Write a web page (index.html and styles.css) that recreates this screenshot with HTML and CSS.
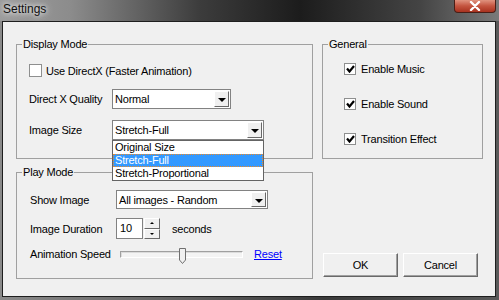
FILE: index.html
```html
<!DOCTYPE html>
<html lang="en">
<head>
    <meta charset="UTF-8">
    <title>Settings</title>
    <link rel="stylesheet" href="styles.css">
</head>
<body>
<div class="window">
    <div class="titlebar">
        <span class="title">Settings</span>
        <div class="close">
            <svg width="14" height="10" viewBox="0 0 14 10"><path d="M3 1 L11 9 M11 1 L3 9" stroke="#fff" stroke-width="2.4" stroke-linecap="round"/></svg>
        </div>
    </div>

    <div class="client">
        <div class="left-col">
            <fieldset class="group display">
                <legend>Display Mode</legend>
                <div class="rows">
                    <label class="check"><span class="box"></span>Use DirectX (Faster Animation)</label>
                    <div class="row">
                        <span class="lbl">Direct X Quality</span>
                        <div class="combo quality">Normal<span class="arrow"></span></div>
                    </div>
                    <div class="row">
                        <span class="lbl">Image Size</span>
                        <div class="combo size">Stretch-Full<span class="arrow"></span>
                            <ul class="list">
                                <li>Original Size</li>
                                <li class="sel">Stretch-Full</li>
                                <li>Stretch-Proportional</li>
                            </ul>
                        </div>
                    </div>
                </div>
            </fieldset>

            <fieldset class="group play">
                <legend>Play Mode</legend>
                <div class="rows">
                    <div class="row">
                        <span class="lbl">Show Image</span>
                        <div class="combo show">All images - Random<span class="arrow"></span></div>
                    </div>
                    <div class="row">
                        <span class="lbl">Image Duration</span>
                        <div class="spin">
                            <span class="num">10</span>
                            <span class="spin-btns">
                                <span class="sb up"></span>
                                <span class="sb down"></span>
                            </span>
                        </div>
                        <span class="unit">seconds</span>
                    </div>
                    <div class="row">
                        <span class="lbl">Animation Speed</span>
                        <div class="slider">
                            <svg class="thumb" width="7" height="16" viewBox="0 0 7 16"><path d="M0.5 0.5 H6.5 V12 L3.5 15.5 L0.5 12 Z" fill="#f0f0f0" stroke="#707070"/></svg>
                        </div>
                        <a class="reset" href="#">Reset</a>
                    </div>
                </div>
            </fieldset>
        </div>

        <div class="right-col">
            <fieldset class="group general">
                <legend>General</legend>
                <div class="rows">
                    <label class="check"><span class="box on"><svg width="9" height="8" viewBox="0 0 9 8"><path d="M1 3.5 L3.5 6.5 L8 1" fill="none" stroke="#000" stroke-width="2.2"/></svg></span>Enable Music</label>
                    <label class="check"><span class="box on"><svg width="9" height="8" viewBox="0 0 9 8"><path d="M1 3.5 L3.5 6.5 L8 1" fill="none" stroke="#000" stroke-width="2.2"/></svg></span>Enable Sound</label>
                    <label class="check"><span class="box on"><svg width="9" height="8" viewBox="0 0 9 8"><path d="M1 3.5 L3.5 6.5 L8 1" fill="none" stroke="#000" stroke-width="2.2"/></svg></span>Transition Effect</label>
                </div>
            </fieldset>
            <div class="buttons">
                <button>OK</button>
                <button>Cancel</button>
            </div>
        </div>
    </div>
</div>
</body>
</html>
```

FILE: styles.css
```css
body {
    margin: 0;
    background: #000;
    font-family: "Liberation Sans", Arial, sans-serif;
    font-size: 11px;
    letter-spacing: -0.2px;
    color: #000;
}

.window {
    width: 499px;
    height: 300px;
    display: flex;
    flex-direction: column;
    background: linear-gradient(to right, #8a8a8a 0, #5c5c5c 40%, #3a3a3a 65%, #5a5a5a 100%);
}

/* title bar */
.titlebar {
    height: 21px;
    position: relative;
    background: linear-gradient(to right, #9c9c9c 0, #8c8c8c 70px, #3c3c3c 200px, #1c1c1c 300px, #444 420px, #7a7a7a 499px);
}

.title {
    display: inline-block;
    padding-left: 3px;
    line-height: 18px;
    font-size: 12px;
    letter-spacing: 0;
    color: #101010;
    text-shadow: 0 0 5px #fff, 0 0 8px #ddd;
}

.close {
    position: absolute;
    top: 0;
    right: 3px;
    width: 42px;
    height: 13px;
    box-sizing: border-box;
    border: 1px solid #4a1e16;
    border-top: none;
    border-radius: 0 0 4px 4px;
    background: linear-gradient(#e0937f, #c4543f 50%, #a8321f);
    display: flex;
    align-items: center;
    justify-content: center;
}

/* client area */
.client {
    flex: 1;
    margin: 0 3px 3px 2px;
    border: 1px solid #1e1e1e;
    background: #f0f0f0;
    display: grid;
    grid-template-columns: 297px 161px;
    column-gap: 9px;
    align-items: start;
    padding: 15px 0 0 13px;
}

.left-col, .right-col {
    display: flex;
    flex-direction: column;
}

.left-col {
    gap: 6px;
}

.group {
    margin: 0;
    padding: 0;
    min-width: 0;
    box-sizing: border-box;
    border: 1px solid #a0a0a0;
}

.group legend {
    padding: 0 1px;
    margin-left: 5px;
    line-height: 14px;
}

.rows {
    display: flex;
    flex-direction: column;
}

.row {
    display: flex;
    align-items: center;
}

.display {
    height: 122px;
}

.display .rows {
    gap: 11px;
    padding: 12px 0 0 12px;
}

.display .lbl {
    width: 83px;
}

.play {
    height: 114px;
}

.play .rows {
    gap: 9px;
    padding: 11px 0 0 13px;
}

.play .lbl {
    width: 86px;
}

.general {
    height: 122px;
}

.general .rows {
    gap: 22px;
    padding: 11px 0 0 21px;
}

/* check boxes */
.check {
    display: flex;
    align-items: center;
    height: 15px;
    gap: 4px;
}

.general .check {
    height: 13px;
    gap: 5px;
}

.box {
    width: 13px;
    height: 13px;
    box-sizing: border-box;
    border: 1px solid #8e8f8f;
    background: #fff;
    display: flex;
    align-items: center;
    justify-content: center;
}

.box.on {
    width: 12px;
    height: 12px;
}

/* combo boxes */
.combo {
    position: relative;
    height: 20px;
    box-sizing: border-box;
    border: 1px solid #828282;
    background: #fff;
    display: flex;
    align-items: center;
    padding: 1px 1px 1px 2px;
}

.combo.quality { width: 119px; }
.combo.size { width: 152px; }
.combo.show { width: 152px; height: 19px; }

.arrow {
    margin-left: auto;
    width: 15px;
    height: 100%;
    box-sizing: border-box;
    border: 1px solid;
    border-color: #fff #696969 #696969 #fff;
    background: #f0f0f0;
    position: relative;
}

.arrow::after {
    content: "";
    position: absolute;
    left: 3px;
    top: 6px;
    border-left: 4px solid transparent;
    border-right: 4px solid transparent;
    border-top: 4px solid #000;
}

.list {
    position: absolute;
    top: calc(100% + 1px);
    left: -1px;
    width: 152px;
    box-sizing: border-box;
    margin: 0;
    padding: 0;
    list-style: none;
    background: #fff;
    border: 1px solid #646464;
    z-index: 2;
}

.list li {
    height: 13px;
    line-height: 13px;
    padding-left: 2px;
    box-sizing: border-box;
}

.list li.sel {
    background: #3399ff;
    color: #fff;
    border: 1px dotted #f08a24;
    line-height: 11px;
    padding-left: 1px;
}

/* spin box */
.spin {
    display: flex;
    height: 21px;
}

.num {
    width: 27px;
    box-sizing: border-box;
    border: 1px solid #828282;
    background: #fff;
    padding: 3px 0 0 3px;
}

.spin-btns {
    display: flex;
    flex-direction: column;
    width: 16px;
    margin-left: 1px;
}

.sb {
    flex: 1;
    box-sizing: border-box;
    border: 1px solid;
    border-color: #fff #696969 #696969 #fff;
    background: #f0f0f0;
    position: relative;
}

.sb::after {
    content: "";
    position: absolute;
    left: 5px;
    top: 3px;
    border-left: 2px solid transparent;
    border-right: 2px solid transparent;
}

.sb.up::after { border-bottom: 2px solid #000; }
.sb.down::after { border-top: 2px solid #000; }

.unit {
    margin-left: 12px;
}

/* slider */
.slider {
    position: relative;
    width: 123px;
    height: 7px;
    margin-left: 4px;
    box-sizing: border-box;
    border: 1px solid;
    border-color: #a0a0a0 #fff #fff #a0a0a0;
    background: #f4f4f4;
    box-shadow: inset 1px 1px 0 #dcdcdc;
}

.thumb {
    position: absolute;
    left: 58px;
    top: -4px;
}

.reset {
    margin-left: 11px;
    color: #0000ff;
}

/* buttons */
.buttons {
    display: flex;
    gap: 5px;
    margin: 94px 0 0 1px;
}

.buttons button {
    width: 75px;
    height: 24px;
    font-family: inherit;
    font-size: 11px;
    letter-spacing: -0.2px;
    color: #000;
    background: #f0f0f0;
    border: 1px solid;
    border-color: #fff #696969 #696969 #fff;
    box-shadow: inset -1px -1px 0 #a0a0a0;
    padding: 0;
}
```
